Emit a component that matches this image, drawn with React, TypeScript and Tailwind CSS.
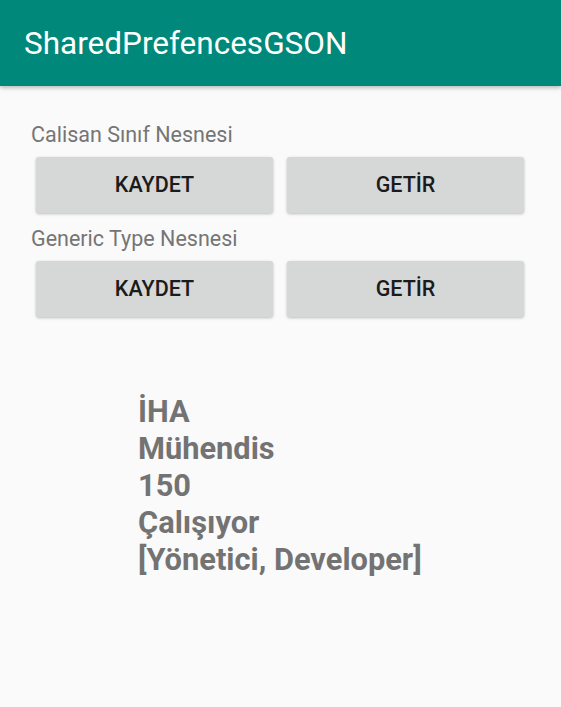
export default function App() {
  const btn =
    "h-[56px] rounded-[3px] bg-[#d6d7d7] text-[21.5px] font-medium text-[#1b1b1b] shadow-[0_1px_3px_rgba(0,0,0,0.25)]";
  return (
    <div className="min-h-[707px] bg-[#fafafa] font-['Roboto',sans-serif]">
      <div className="flex h-[86px] items-center bg-[#00887a] pl-[24px] shadow-[0_2px_4px_rgba(0,0,0,0.25)]">
        <h1 className="pt-[2px] text-[31.5px] text-white">SharedPrefencesGSON</h1>
      </div>
      <div className="px-[31px] pt-[35px]">
        <p className="text-[21.5px] leading-[27px] text-[#757575]">Calisan Sınıf Nesnesi</p>
        <div className="mt-[9px] grid grid-cols-2 gap-[14px] pl-[5px] pr-[6px]">
          <button className={btn}>KAYDET</button>
          <button className={btn}>GETİR</button>
        </div>
        <p className="mt-[12px] text-[21.5px] leading-[27px] text-[#757575]">Generic Type Nesnesi</p>
        <div className="mt-[9px] grid grid-cols-2 gap-[14px] pl-[5px] pr-[6px]">
          <button className={btn}>KAYDET</button>
          <button className={btn}>GETİR</button>
        </div>
      </div>
      <div className="mt-[76px] pl-[138px] text-[30.8px] font-bold leading-[37px] text-[#737373]">
        <p>İHA</p>
        <p>Mühendis</p>
        <p>150</p>
        <p>Çalışıyor</p>
        <p>[Yönetici, Developer]</p>
      </div>
    </div>
  );
}
